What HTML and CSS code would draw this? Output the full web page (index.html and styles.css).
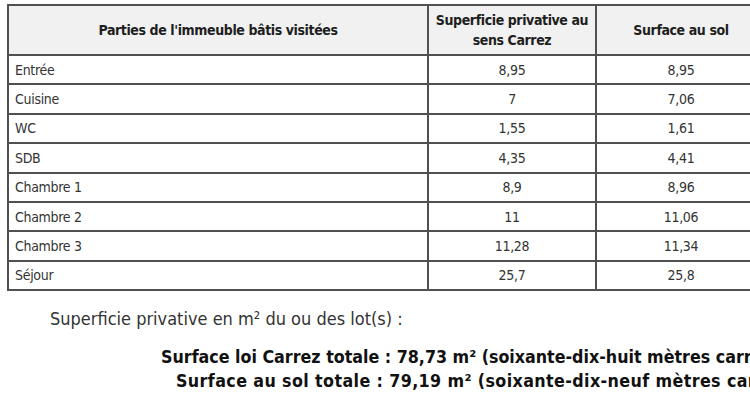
FILE: index.html
```html
<!DOCTYPE html>
<html lang="fr">
<head>
<meta charset="utf-8">
<link rel="stylesheet" href="styles.css">
</head>
<body>
<div class="page">
  <table class="surf">
    <colgroup>
      <col class="c1"><col class="c2"><col class="c3">
    </colgroup>
    <thead>
      <tr>
        <th>Parties de l'immeuble bâtis visitées</th>
        <th>Superficie privative au sens Carrez</th>
        <th>Surface au sol</th>
      </tr>
    </thead>
    <tbody>
      <tr><td>Entrée</td><td>8,95</td><td>8,95</td></tr>
      <tr><td>Cuisine</td><td>7</td><td>7,06</td></tr>
      <tr><td>WC</td><td>1,55</td><td>1,61</td></tr>
      <tr><td>SDB</td><td>4,35</td><td>4,41</td></tr>
      <tr><td>Chambre 1</td><td>8,9</td><td>8,96</td></tr>
      <tr><td>Chambre 2</td><td>11</td><td>11,06</td></tr>
      <tr><td>Chambre 3</td><td>11,28</td><td>11,34</td></tr>
      <tr><td>Séjour</td><td>25,7</td><td>25,8</td></tr>
    </tbody>
  </table>
  <p class="lead">Superficie privative en m² du ou des lot(s) :</p>
  <div class="totals">
    <p>Surface loi Carrez totale : 78,73 m² (soixante-dix-huit mètres carrés soixante-treize)</p>
    <p>Surface au sol totale : 79,19 m² (soixante-dix-neuf mètres carrés dix-neuf)</p>
  </div>
</div>
</body>
</html>
```

FILE: styles.css
```css
html, body {
  margin: 0;
  padding: 0;
  background: #fff;
  overflow: hidden;
}
body {
  font-family: "DejaVu Sans Condensed", "DejaVu Sans", sans-serif;
  color: #2a2a2a;
  width: 750px;
  height: 420px;
}
.page {
  padding: 4px 0 0 7px;
  width: 900px;
}
.surf {
  border-collapse: collapse;
  table-layout: fixed;
  width: 758px;
  font-size: 14px;
  letter-spacing: -0.3px;
}
.c1 { width: 420px; }
.c2 { width: 168px; }
.c3 { width: 170px; }
.surf th, .surf td {
  border: 2px solid #505050;
  padding: 0 6px;
}
.surf th {
  background: #f1f1f1;
  font-weight: bold;
  height: 48px;
  line-height: 20px;
  letter-spacing: -0.4px;
  text-align: center;
  color: #1e1e1e;
}
.surf td {
  height: 27.4px;
  line-height: 16px;
  text-align: center;
  color: #333;
}
.surf td:first-child {
  text-align: left;
}
.lead {
  margin: 16px 0 0 43px;
  font-size: 18px;
  line-height: 24px;
  color: #333;
}
.totals {
  margin: 14px 0 0 0;
  width: 1000px;
  font-size: 17.7px;
  font-weight: bold;
  color: #111;
  line-height: 24px;
}
.totals p {
  margin: 0;
  white-space: nowrap;
}
.totals p:first-child { padding-left: 154px; }
.totals p:last-child { padding-left: 169px; letter-spacing: 0.4px; }
```
